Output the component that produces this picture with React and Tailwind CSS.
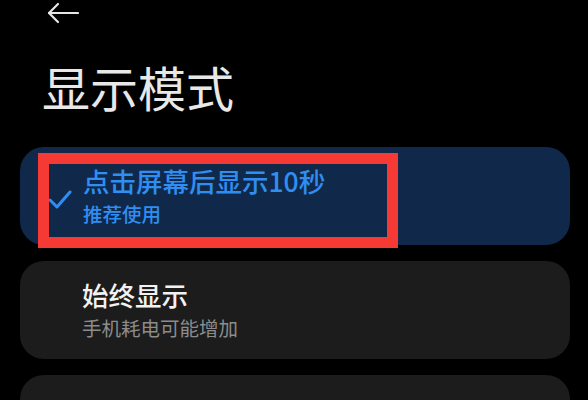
const cjk = { fontFamily: '"Noto Sans CJK SC", "Noto Sans", sans-serif' };

function BackArrow() {
    return (
        <svg width="32" height="22" viewBox="0 0 32 22" fill="none" stroke="#e6e6e6" strokeWidth="2.2" strokeLinecap="round" strokeLinejoin="round">
            <path d="M2 11 H31" />
            <path d="M11 2 L2 11 L11 20" />
        </svg>
    );
}

function Tick() {
    return (
        <svg width="24" height="20" viewBox="0 0 24 20" fill="none" stroke="#2f8ef2" strokeWidth="3" strokeLinecap="round" strokeLinejoin="round">
            <path d="M2 10 L9 17 L22 2" />
        </svg>
    );
}

export default function App() {
    return (
        <div className="w-[588px] h-[400px] overflow-hidden bg-black" style={cjk}>
            {/* Header */}
            <div className="pl-[47px] pt-[2px] h-[24px]">
                <BackArrow />
            </div>
            <h1 className="pl-[42px] mt-[38px] text-[48px] leading-[48px] font-normal text-[#e8e8e8]">显示模式</h1>

            <div className="mt-[37px] ml-[20px] w-[550px] flex flex-col gap-[16px]">
                {/* Selected option */}
                <div className="relative h-[98px] rounded-[24px] bg-[#10294a] flex items-center">
                    <div className="w-[63px] pl-[28px] pt-[8px]">
                        <Tick />
                    </div>
                    <div className="flex flex-col">
                        <span className="text-[26.5px] leading-[32px] font-medium text-[#2f8ef2]">点击屏幕后显示10秒</span>
                        <span className="mt-[4px] text-[19.5px] leading-[26px] font-medium text-[#2f8ef2]">推荐使用</span>
                    </div>
                    {/* Highlight box */}
                    <div className="absolute left-[18px] top-[6px] w-[360px] h-[95px] border-[11px] border-[#f53a36]" />
                </div>

                <div className="h-[98px] rounded-[24px] bg-[#1c1c1c] flex items-center pl-[62px]">
                    <div className="flex flex-col">
                        <span className="text-[26.5px] leading-[32px] font-medium text-[#f2f2f2]">始终显示</span>
                        <span className="mt-[4px] text-[19.5px] leading-[26px] text-[#8c8c8c]">手机耗电可能增加</span>
                    </div>
                </div>

                <div className="h-[98px] rounded-[24px] bg-[#1c1c1c]" />
            </div>
        </div>
    );
}
